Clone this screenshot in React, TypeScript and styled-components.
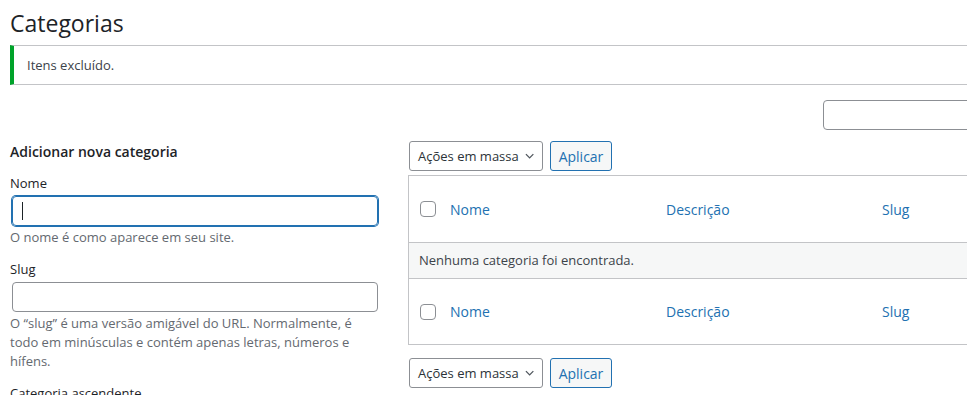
import styled, { createGlobalStyle } from "styled-components";

const GlobalStyle = createGlobalStyle`
  html, body {
    margin: 0;
    background: #fff;
    overflow: hidden;
  }
  body {
    font-family: "Open Sans", "Noto Sans", sans-serif;
    font-size: 13px;
    line-height: 19px;
    color: #3c434a;
  }
  * { box-sizing: border-box; }
`;

const columns = ["Nome", "Descrição", "Slug"];

function Chevron() {
  return (
    <svg width="10" height="6" viewBox="0 0 10 6" aria-hidden>
      <path d="M1 1l4 4 4-4" fill="none" stroke="#50575e" strokeWidth="1.4" />
    </svg>
  );
}

function BulkActions() {
  return (
    <NavRow>
      <Select>
        <span>Ações em massa</span>
        <Chevron />
      </Select>
      <ApplyButton>Aplicar</ApplyButton>
    </NavRow>
  );
}

function HeadRow({ $footer }: { $footer?: boolean }) {
  return (
    <Row $height={$footer ? 65 : 66}>
      <CheckCell>
        <Checkbox />
      </CheckCell>
      {columns.map((c) => (
        <HeadCell key={c}>{c}</HeadCell>
      ))}
    </Row>
  );
}

export default function App() {
  return (
    <>
      <GlobalStyle />
      <Wrap>
        <Title>Categorias</Title>
        <Notice>Itens excluído.</Notice>

        <SearchRow>
          <SearchInput />
        </SearchRow>

        <Columns>
          <LeftCol>
            <FormTitle>Adicionar nova categoria</FormTitle>

            <Field>
              <Label>Nome</Label>
              <TextInput $focused>
                <Caret />
              </TextInput>
              <Help>O nome é como aparece em seu site.</Help>
            </Field>

            <Field>
              <Label>Slug</Label>
              <TextInput />
              <Help>
                O “slug” é uma versão amigável do URL. Normalmente, é todo em
                minúsculas e contém apenas letras, números e hífens.
              </Help>
            </Field>

            <Field>
              <Label>Categoria ascendente</Label>
            </Field>
          </LeftCol>

          <RightCol>
            <BulkActions />
            <Table>
              <HeadRow />
              <Row $height={37} $alt>
                <EmptyCell>Nenhuma categoria foi encontrada.</EmptyCell>
              </Row>
              <HeadRow $footer />
            </Table>
            <BottomNav>
              <BulkActions />
            </BottomNav>
          </RightCol>
        </Columns>
      </Wrap>
    </>
  );
}

const Wrap = styled.div`
  width: 1010px;
  padding-left: 10px;
`;

const Title = styled.h1`
  margin: 0;
  padding-top: 9px;
  font-size: 23px;
  line-height: 29px;
  font-weight: 400;
  color: #1d2327;
`;

const Notice = styled.div`
  margin-top: 7px;
  height: 40px;
  display: flex;
  align-items: center;
  padding: 0 13px;
  border: 1px solid #c3c4c7;
  border-left: 4px solid #00a32a;
  border-right: none;
  background: #fff;
  color: #3c434a;
`;

const SearchRow = styled.div`
  display: flex;
  justify-content: flex-end;
  margin-top: 15px;
`;

const SearchInput = styled.div`
  width: 187px;
  height: 30px;
  border: 1px solid #8c8f94;
  border-radius: 4px;
`;

const Columns = styled.div`
  display: flex;
  align-items: flex-start;
  gap: 30px;
  margin-top: 11px;
`;

const LeftCol = styled.div`
  width: 368px;
  flex: none;
`;

const FormTitle = styled.h2`
  margin: 0 0 12px;
  padding-top: 1px;
  font-size: 14px;
  line-height: 20px;
  font-weight: 600;
  color: #1d2327;
`;

const Field = styled.div`
  margin-bottom: 13px;
`;

const Label = styled.div`
  color: #1d2327;
  margin-bottom: 3px;
`;

const TextInput = styled.div<{ $focused?: boolean }>`
  width: 366px;
  height: 30px;
  margin-left: 2px;
  display: flex;
  align-items: center;
  padding-left: 9px;
  border-radius: 4px;
  border: 1px solid ${({ $focused }) => ($focused ? "#2271b1" : "#8c8f94")};
  box-shadow: ${({ $focused }) => ($focused ? "0 0 0 1px #2271b1" : "none")};
`;

const Caret = styled.span`
  width: 1px;
  height: 18px;
  background: #1d2327;
`;

const Help = styled.p`
  margin: 2px 0 0;
  color: #646970;
`;

const RightCol = styled.div`
  flex: 1;
  min-width: 0;
`;

const NavRow = styled.div`
  display: flex;
  gap: 7px;
  margin-left: 1px;
`;

const Select = styled.div`
  width: 134px;
  height: 30px;
  display: flex;
  align-items: center;
  gap: 6px;
  padding: 0 8px;
  border: 1px solid #8c8f94;
  border-radius: 3px;
  font-size: 13px;
  white-space: nowrap;
  color: #2c3338;
`;

const ApplyButton = styled.div`
  width: 62px;
  height: 30px;
  display: flex;
  align-items: center;
  justify-content: center;
  border: 1px solid #2271b1;
  border-radius: 3px;
  background: #f6f7f7;
  font-size: 14px;
  color: #2271b1;
`;

const Table = styled.div`
  margin-top: 4px;
  border: 1px solid #c3c4c7;
  border-right: none;
`;

const Row = styled.div<{ $height: number; $alt?: boolean }>`
  display: grid;
  grid-template-columns: 31px 216px 216px 1fr;
  align-items: center;
  height: ${({ $height }) => $height}px;
  background: ${({ $alt }) => ($alt ? "#f6f7f7" : "#fff")};
  border-top: ${({ $alt }) => ($alt ? "1px solid #c3c4c7" : "none")};
  border-bottom: ${({ $alt }) => ($alt ? "1px solid #c3c4c7" : "none")};
`;

const CheckCell = styled.div`
  display: flex;
  padding-left: 11px;
`;

const Checkbox = styled.span`
  width: 16px;
  height: 16px;
  border: 1px solid #8c8f94;
  border-radius: 4px;
  background: #fff;
`;

const HeadCell = styled.div`
  padding-left: 10px;
  font-size: 14px;
  color: #2271b1;
`;

const EmptyCell = styled.div`
  grid-column: 1 / -1;
  padding-left: 10px;
  color: #3c434a;
`;

const BottomNav = styled.div`
  margin-top: 13px;
`;
